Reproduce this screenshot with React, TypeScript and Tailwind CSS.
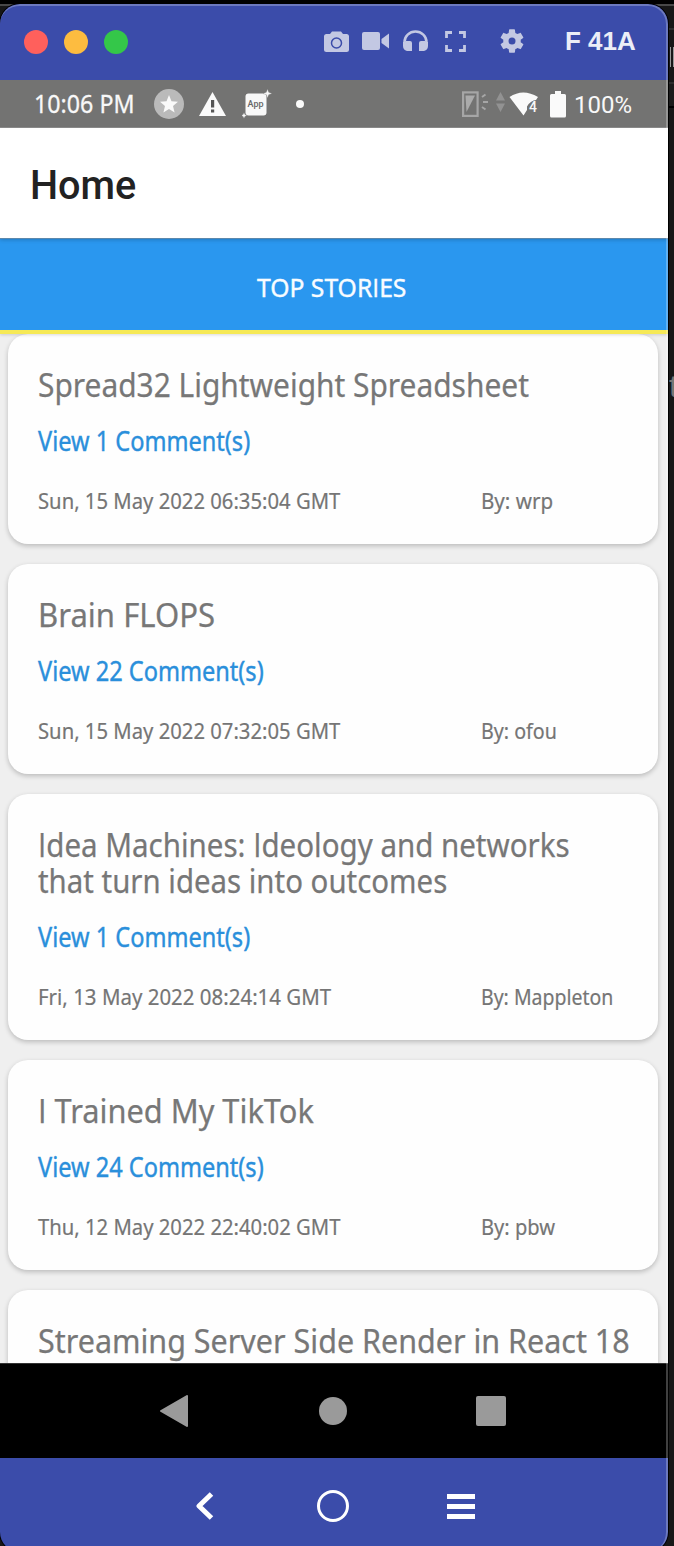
import { useLayoutEffect, useRef, useState } from "react";

function FitText({ text, width, className = "" }: { text: string; width: number; className?: string }) {
  const ref = useRef<HTMLSpanElement>(null);
  const [scale, setScale] = useState(1);
  useLayoutEffect(() => {
    if (ref.current) setScale(width / ref.current.offsetWidth);
  }, [text, width]);
  return (
    <div className={`whitespace-nowrap ${className}`} style={{ width }}>
      <span ref={ref} className="inline-block origin-left" style={{ transform: `scaleX(${scale})` }}>
        {text.split(/(I)/).map((part, i) =>
          part === "I" ? <span key={i} className="font-['Open_Sans'] leading-none">I</span> : part
        )}
      </span>
    </div>
  );
}

type Line = [string, number];
type Story = { title: Line[]; comments?: Line; date?: Line; by?: Line };

const stories: Story[] = [
  { title: [["Spread32 Lightweight Spreadsheet", 491]], comments: ["View 1 Comment(s)", 212], date: ["Sun, 15 May 2022 06:35:04 GMT", 302], by: ["By: wrp", 72] },
  { title: [["Brain FLOPS", 177]], comments: ["View 22 Comment(s)", 226], date: ["Sun, 15 May 2022 07:32:05 GMT", 302], by: ["By: ofou", 76] },
  { title: [["Idea Machines: Ideology and networks", 532], ["that turn ideas into outcomes", 409]], comments: ["View 1 Comment(s)", 212], date: ["Fri, 13 May 2022 08:24:14 GMT", 293], by: ["By: Mappleton", 132] },
  { title: [["I Trained My TikTok", 276]], comments: ["View 24 Comment(s)", 226], date: ["Thu, 12 May 2022 22:40:02 GMT", 302], by: ["By: pbw", 74] },
  { title: [["Streaming Server Side Render in React 18", 592]] },
];

function StoryCard({ story }: { story: Story }) {
  return (
    <article className="shrink-0 rounded-[20px] bg-[#fefefe] pt-[33px] pb-[28px] pl-[29.5px] shadow-[0_2px_5px_rgba(0,0,0,0.22)]">
      <div className="text-[33px] leading-9 text-[#777] [-webkit-text-stroke:0.25px_#777]">
        {story.title.map(([t, w]) => <FitText key={t} text={t} width={w} />)}
      </div>
      {story.comments && (
        <FitText text={story.comments[0]} width={story.comments[1]} className="mt-[20px] text-[27px] leading-9 text-[#2a8fdb] [-webkit-text-stroke:0.4px_#2a8fdb]" />
      )}
      {story.date && story.by && (
        <div className="mt-[26px] mb-px flex text-[22px] leading-[30px] text-[#757575] [-webkit-text-stroke:0.2px_#757575]">
          <div className="w-[443px]"><FitText text={story.date[0]} width={story.date[1]} /></div>
          <FitText text={story.by[0]} width={story.by[1]} />
        </div>
      )}
    </article>
  );
}

function StatusBar() {
  return (
    <div className="flex h-12 shrink-0 items-center bg-[#737372] pl-[34px] text-[#f8f8f8] shadow-[inset_0_-1px_0_#8c8c8c]">
      <FitText text="10:06 PM" width={101} className="-mt-0.5 text-[26px] leading-[46px] [-webkit-text-stroke:0.3px_#f8f8f8]" />
      <svg className="ml-[19px] h-[30px] w-[30px]" viewBox="0 0 30 30">
        <circle cx="15" cy="15" r="15" fill="#bababa" />
        <path d="M15 6l2.500 6.200 6.500.5-5 4.300 1.600 6.500-5.600-3.500-5.600 3.500 1.600-6.500-5-4.300 6.500-.5z" fill="#fafafa" />
      </svg>
      <svg className="ml-[15px] h-6 w-[27px]" viewBox="0 0 27 24">
        <path d="M13.500 0L27 24H0z" fill="#fafafa" />
        <path d="M12 8h3.200v7.500H12zM12 17.500h3.200v3H12z" fill="#555" />
      </svg>
      <div className="relative ml-4 h-[30px] w-[30px]">
        <svg className="h-[30px] w-[30px]" viewBox="0 0 30 30">
          <rect x="3.500" y="4.500" width="21" height="22" rx="3" fill="#f8f8f8" />
          <path d="M25.500 0l1.200 3.300 3.300 1.200-3.300 1.200-1.200 3.300-1.200-3.300-3.300-1.200 3.300-1.200zM2 23.500l.9 2.100 2.100.9-2.100.9-.9 2.100-.9-2.100-2.100-.9 2.100-.9z" fill="#f8f8f8" stroke="#737372" strokeWidth=".3" />
        </svg>
        <span className="absolute top-[9px] left-[5.500px] font-['Roboto'] text-[9px] leading-[12px] font-medium text-[#666]">App</span>
      </div>
      <div className="ml-[24px] h-2 w-2 rounded-full bg-[#fafafa]" />
      <div className="relative ml-[158px] h-[30px] w-[78px]">
        <svg className="h-[30px] w-[78px]" viewBox="0 0 78 30">
          <rect x="1.100" y="3.400" width="14.500" height="23.500" fill="none" stroke="#a6a6a6" strokeWidth="2.200" />
          <path d="M3.500 6.500H13L4.500 23z" fill="#ababab" />
          <path d="M20 8l3.500-2.500M21 13h5M20 18l3.500 2.500" stroke="#a6a6a6" strokeWidth="2" />
          <path d="M38.500 3l4.500 8.500h-9zM38.500 23l4.500-8.500h-9z" fill="#929292" />
          <path d="M47.500 8Q61 -1 76 8L74 11Q69 11 65 17.500V21L61.500 26.500z" fill="#fafafa" />
        </svg>
        <span className="absolute top-[10px] left-[67px] font-['Roboto'] text-[14px] leading-4 font-medium">4</span>
      </div>
      <svg className="ml-[10px] h-[27px] w-4" viewBox="0 0 16 27">
        <path d="M5 0h6v3h3.500q1.500 0 1.500 1.500V25q0 1.500-1.500 1.500h-13Q0 26.500 0 25V4.500Q0 3 1.500 3H5z" fill="#fafafa" />
      </svg>
      <FitText text="100%" width={58} className="ml-2 pt-px font-['Roboto'] text-[24px] leading-12" />
    </div>
  );
}

function Backdrop() {
  return (
    <div className="absolute inset-y-0 right-0 w-[6px] overflow-hidden bg-[#171717]">
      <div className="mt-[28px] h-[19px] border-t-2 border-[#2d2d2d]" />
      <div className="flex h-5 justify-between pl-[2px]"><i className="w-px bg-[#999]" /><i className="w-px bg-[#999]" /></div>
      <div className="mt-[15px] h-[26px] border-y-2 border-t-[#2d2d2d] border-b-black bg-[#1b1b1b]" />
      <div className="mt-[260px] ml-px font-['Liberation_Sans'] text-[32px] leading-[36px] text-[#777]">t</div>
    </div>
  );
}

export default function App() {
  return (
    <div className="relative flex h-[1546px] w-[674px] overflow-hidden bg-[#171717] pt-1 font-['Noto_Sans',sans-serif]">
      <Backdrop />
      <div className="absolute inset-x-0 top-0 h-[6px] border-t-4 border-black bg-[#484848]" />
      <main className="relative flex h-[1548px] w-[668px] shrink-0 flex-col overflow-hidden rounded-[20px] bg-[#3b4caa] shadow-[0_0_0_1px_#000]">
        <header className="flex h-[76px] shrink-0 items-center pl-6 text-[#c3c8e3]">
          <div className="flex gap-4">
            <i className="h-6 w-6 rounded-full bg-[#ff605c]" />
            <i className="h-6 w-6 rounded-full bg-[#fdbc40]" />
            <i className="h-6 w-6 rounded-full bg-[#34c749]" />
          </div>
          <svg className="-mt-px ml-[196px] h-[22px] w-[25px]" viewBox="0 0 25 22">
            <path d="M2.500 3H6l2-2.500h9L19 3h3.500Q25 3 25 5.500v13Q25 21 22.500 21h-20Q0 21 0 18.500v-13Q0 3 2.500 3z" fill="currentColor" />
            <circle cx="12.500" cy="12" r="5" fill="none" stroke="#3b4caa" strokeWidth="1.500" />
          </svg>
          <svg className="-mt-0.5 ml-[13px] h-[18px] w-[27px]" viewBox="0 0 27 18">
            <rect width="18" height="18" rx="2" fill="currentColor" />
            <path d="M19.500 7L27 1.500v15L19.500 11z" fill="currentColor" />
          </svg>
          <svg className="-mt-0.5 ml-[14px] h-[22px] w-[25px]" viewBox="0 0 25 22">
            <path d="M1.500 14V12a11 10.500 0 0 1 22 0v2" fill="none" stroke="currentColor" strokeWidth="2.500" />
            <path d="M0 12h2l1-1h4q2 0 2 2v8H4q-4-1-4-5zM25 12h-2l-1-1h-4q-2 0-2 2v8h5q4-1 4-5z" fill="currentColor" />
          </svg>
          <svg className="-mt-0.5 ml-[17px] h-[21px] w-[21px]" viewBox="0 0 21 21">
            <path d="M1.500 7V1.500H7M14 1.500h5.500V7M19.500 14v5.500H14M7 19.500H1.500V14" fill="none" stroke="currentColor" strokeWidth="2.800" />
          </svg>
          <svg className="-mt-0.5 ml-[32px] h-7 w-7" viewBox="0 0 24 24" fill="currentColor">
            <path d="M19.430 12.980c.04-.32.07-.64.07-.98s-.03-.66-.07-.98l2.110-1.650c.19-.15.24-.42.12-.64l-2-3.460c-.12-.22-.39-.3-.61-.22l-2.490 1c-.52-.4-1.080-.73-1.690-.98l-.38-2.650C14.460 2.180 14.250 2 14 2h-4c-.25 0-.46.18-.49.42l-.38 2.650c-.61.25-1.170.59-1.690.98l-2.490-1c-.23-.09-.49 0-.61.22l-2 3.460c-.13.22-.07.49.12.64l2.110 1.650c-.04.32-.07.65-.07.98s.03.66.07.98l-2.110 1.650c-.19.15-.24.42-.12.64l2 3.460c.12.22.39.3.61.22l2.490-1c.52.4 1.080.73 1.690.98l.38 2.650c.03.24.24.42.49.42h4c.25 0 .46-.18.49-.42l.38-2.650c.61-.25 1.170-.59 1.690-.98l2.490 1c.23.09.49 0 .61-.22l2-3.460c.12-.22.07-.49-.12-.64z" />
            <circle cx="12" cy="12" r="3" fill="#3b4caa" />
          </svg>
          <div className="-mt-px ml-[39px] whitespace-nowrap font-['Liberation_Sans'] text-[26px] font-bold text-[#eceef7]">F 41A</div>
        </header>
        <StatusBar />
        <section className="relative z-20 flex h-[110px] shrink-0 items-center bg-white pt-[5px] pl-[30px] shadow-[0_1px_0_#5c88ac,0_2px_4px_rgba(0,0,0,0.2)]">
          <FitText text="Home" width={106} className="font-['Roboto'] text-[40px] leading-none font-medium text-[#222]" />
        </section>
        <nav className="relative z-10 flex h-[96px] shrink-0 items-center justify-center border-b-4 border-[#f6e956] bg-[#2a97ef] pr-[6px] shadow-[0_1px_3px_rgba(0,0,0,0.15)]">
          <FitText text="TOP STORIES" width={149} className="mt-1.5 text-[26px] leading-9 text-[#f8fcff] [-webkit-text-stroke:0.4px_#f8fcff]" />
        </nav>
        <div className="flex h-[1029px] shrink-0 flex-col gap-5 overflow-hidden bg-[#efefef] pr-[10px] pl-2">
          {stories.map((s) => <StoryCard key={s.title[0][0]} story={s} />)}
        </div>
        <div className="flex h-[95px] shrink-0 items-center border-t border-[#333] bg-black pl-[160px]">
          <svg className="h-8 w-7" viewBox="0 0 28 32"><path d="M27 1v30L1 16z" fill="#9a9a9a" stroke="#9a9a9a" strokeWidth="2" strokeLinejoin="round" /></svg>
          <div className="ml-[131px] h-7 w-7 rounded-full bg-[#9a9a9a]" />
          <div className="ml-[129px] h-[30px] w-[30px] rounded-[2px] bg-[#9a9a9a]" />
        </div>
        <footer className="flex h-24 shrink-0 items-center pl-[196px] text-white">
          <svg className="h-7 w-[18px]" viewBox="0 0 18 28"><path d="M15.500 2L3 14l12.500 12" fill="none" stroke="currentColor" strokeWidth="5" strokeLinejoin="round" /></svg>
          <div className="ml-[103px] h-8 w-8 rounded-full border-[3px] border-white" />
          <div className="ml-[98px] flex w-7 flex-col gap-[5px]">
            <i className="h-[5px] bg-white" /><i className="h-[5px] bg-white" /><i className="h-[5px] bg-white" />
          </div>
        </footer>
        <div className="pointer-events-none absolute inset-0 z-30 rounded-[20px] border-2 border-b-0 border-l-0 border-white/25" />
      </main>
    </div>
  );
}
